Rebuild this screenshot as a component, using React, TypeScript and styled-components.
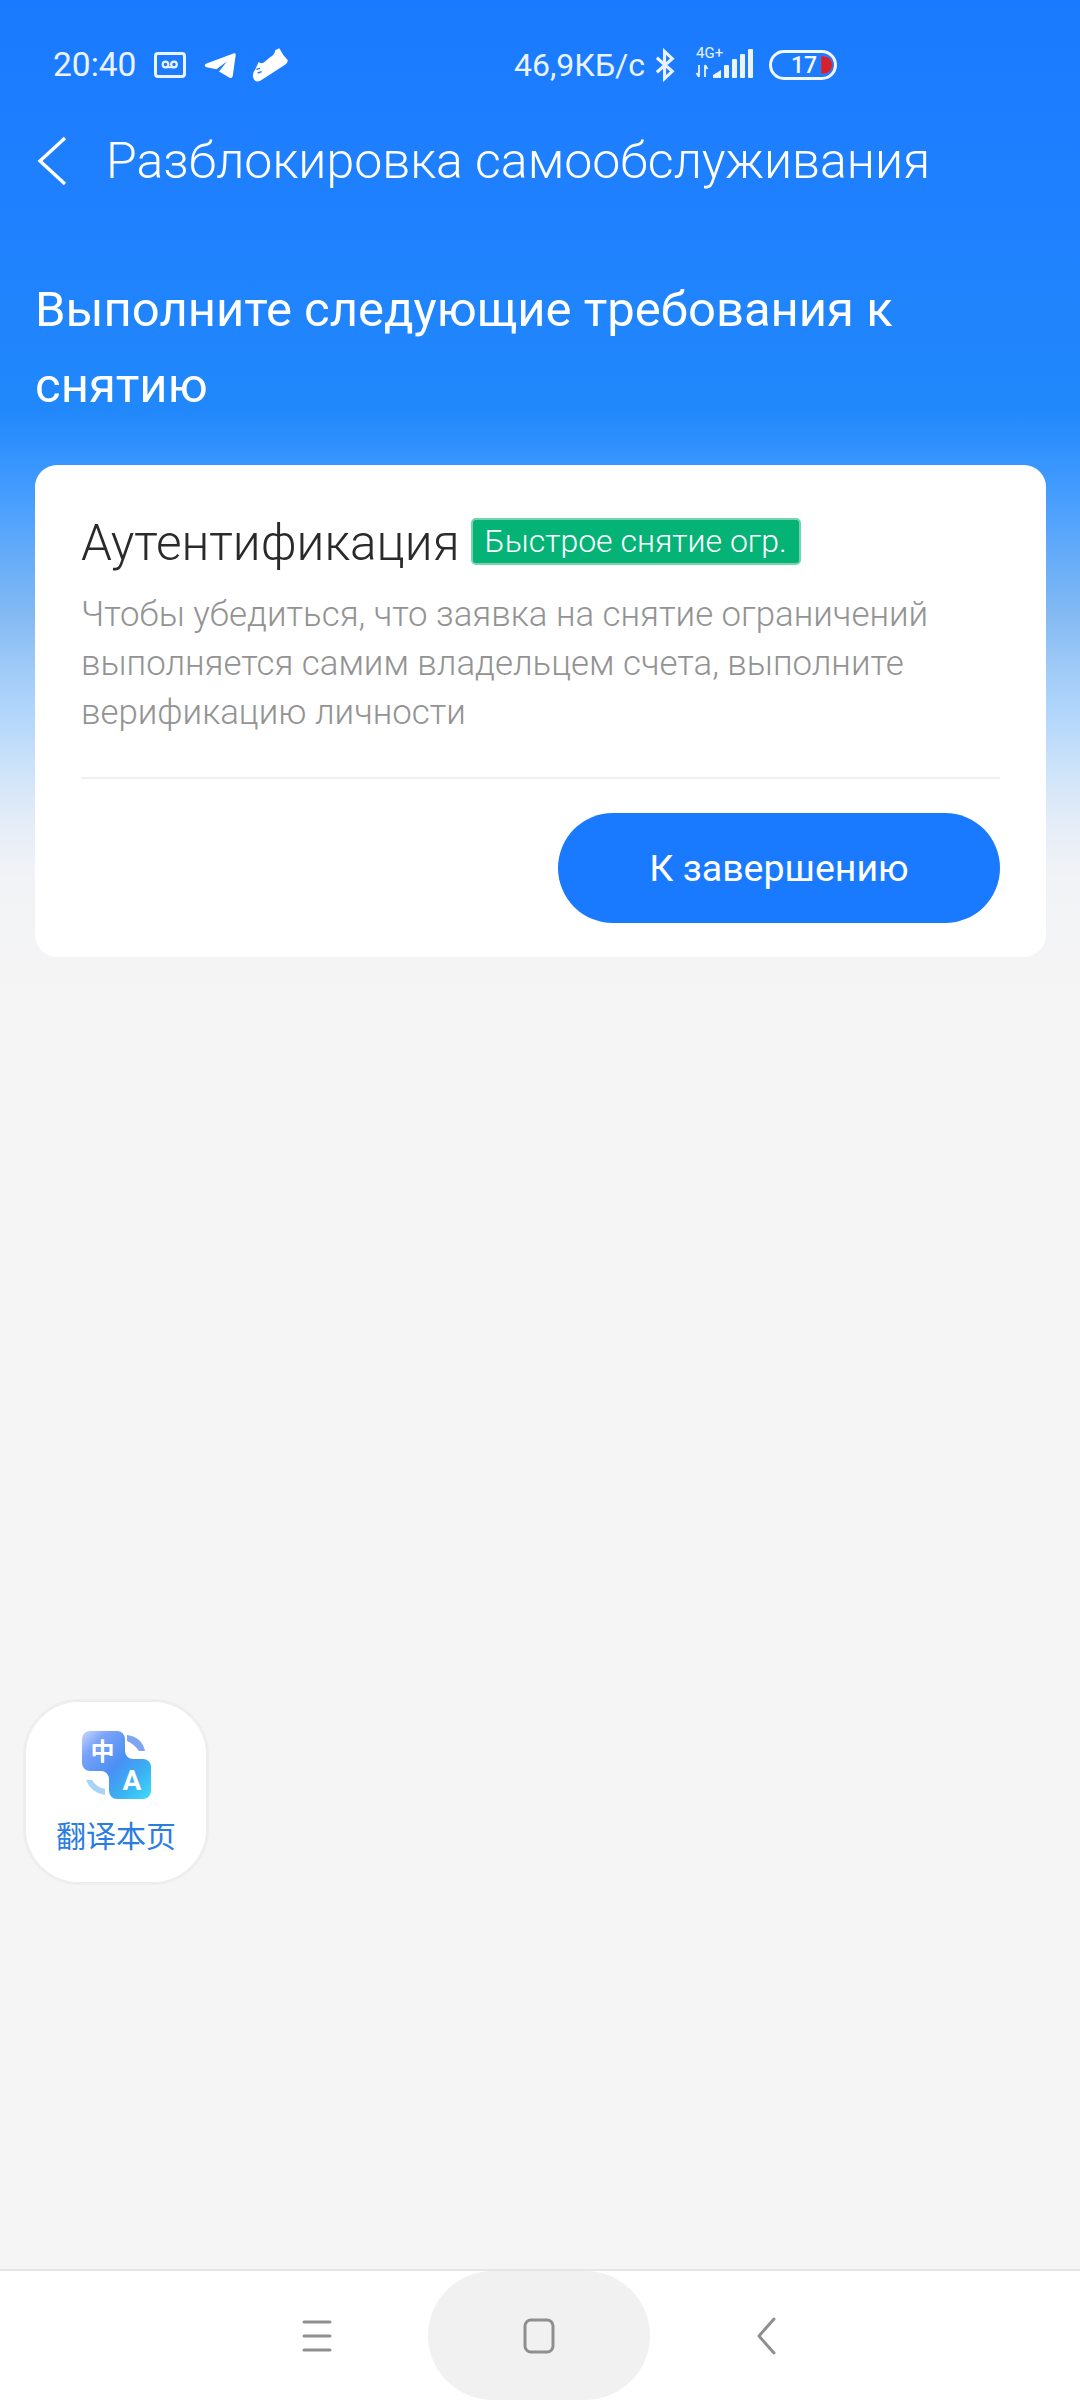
import React from "react";
import styled, { createGlobalStyle } from "styled-components";

const Global = createGlobalStyle`
  html, body { margin: 0; padding: 0; }
  body { font-family: Roboto, "Liberation Sans", sans-serif; background: #f5f5f5; }
`;

const Page = styled.div`
  position: relative;
  width: 1080px;
  height: 2400px;
  display: flex;
  flex-direction: column;
  overflow: hidden;
  background: linear-gradient(
    180deg,
    #1a7aff 0,
    #1f80ff 200px,
    #2188fb 409px,
    #429bff 488px,
    #6aaef8 566px,
    #85baf2 618px,
    #a0cbf8 670px,
    #b6d8fb 723px,
    #d0e4f9 775px,
    #e6edf7 827px,
    #f2f3f6 880px,
    #f5f5f5 1010px
  );
`;

const StatusBar = styled.div`
  height: 130px;
  flex: none;
  display: flex;
  align-items: center;
  justify-content: space-between;
  padding: 0 243px 0 53px;
  color: #eaf3ff;
  box-sizing: border-box;
`;

const StatusGroup = styled.div<{ $gap: number }>`
  display: flex;
  align-items: center;
  gap: ${(p) => p.$gap}px;
`;

const StatusText = styled.span<{ $size: number }>`
  font-size: ${(p) => p.$size}px;
  line-height: 40px;
  font-weight: 400;
`;

const Header = styled.div`
  height: 62px;
  display: flex;
  align-items: center;
  padding-left: 37px;
  color: #fff;
`;

const HeaderTitle = styled.h1`
  margin: 0 0 0 39px;
  font-size: 50px;
  font-weight: 300;
  white-space: nowrap;
`;

const Heading = styled.h2`
  margin: 80px 0 0;
  padding: 0 35px;
  color: #fff;
  font-size: 49px;
  line-height: 76px;
  font-weight: 400;
`;

const Card = styled.section`
  margin: 41px 34px 0 35px;
  padding: 46px 46px 34px;
  background: #fff;
  border-radius: 22px;
  display: flex;
  flex-direction: column;
`;

const TitleRow = styled.div`
  display: flex;
  align-items: center;
  gap: 11px;
  height: 64px;
`;

const CardTitle = styled.h3`
  margin: 0;
  font-size: 49.5px;
  font-weight: 300;
  color: #2a2a2a;
  white-space: nowrap;
`;

const Badge = styled.span`
  box-sizing: border-box;
  height: 47px;
  padding: 0 12px;
  display: inline-flex;
  align-items: center;
  background: #06b377;
  border: 2px solid #76d3ae;
  border-radius: 5px;
  color: #fff;
  font-size: 32px;
  font-weight: 300;
  white-space: nowrap;
  transform: translateY(-2px);
`;

const Description = styled.p`
  margin: 15px 0 0;
  font-size: 34.8px;
  line-height: 49px;
  font-weight: 300;
  color: #939393;
`;

const Divider = styled.div`
  height: 2px;
  background: #f0f0f0;
  margin-top: 40px;
`;

const ActionRow = styled.div`
  display: flex;
  justify-content: flex-end;
  margin-top: 34px;
`;

const PrimaryButton = styled.button`
  width: 442px;
  height: 110px;
  border: 0;
  border-radius: 55px;
  background: #1a7aff;
  color: #fff;
  font-family: inherit;
  font-size: 37.5px;
  font-weight: 400;
`;

const Spacer = styled.div`
  flex: 1;
`;

const FloatButton = styled.div`
  position: absolute;
  left: 23px;
  top: 1699px;
  box-sizing: border-box;
  width: 186px;
  height: 186px;
  border-radius: 56px;
  background: #fff;
  border: 3px solid #eeeeee;
  display: flex;
  flex-direction: column;
  align-items: center;
  padding-top: 29px;
`;

const FloatLabel = styled.span`
  margin-top: 15px;
  font-family: "Noto Sans CJK SC", sans-serif;
  font-size: 30px;
  line-height: 40px;
  color: #2a7de1;
  white-space: nowrap;
`;

const NavBar = styled.nav`
  flex: none;
  height: 131px;
  box-sizing: border-box;
  border-top: 2px solid #e6e6e6;
  padding-right: 2px;
  background: #fff;
  display: flex;
  justify-content: center;
  align-items: center;
`;

const NavSlot = styled.div<{ $shift?: number }>`
  width: 222px;
  box-sizing: border-box;
  padding-left: ${(p) => p.$shift ?? 0}px;
  display: flex;
  justify-content: center;
  align-items: center;
`;

const NavHome = styled(NavSlot)`
  height: 129px;
  background: #f1f1f1;
  border-radius: 65px;
`;

const Tape = () => (
  <svg width="32" height="26" viewBox="0 0 32 26" fill="none" stroke="#eaf3ff">
    <rect x="1.5" y="1.5" width="29" height="23" rx="2.5" strokeWidth="3" />
    <circle cx="11.5" cy="12.5" r="2.8" strokeWidth="2.2" />
    <circle cx="20" cy="12.5" r="2.8" strokeWidth="2.2" />
    <path d="M11.5 15.2h8.500" strokeWidth="2" />
  </svg>
);

const Telegram = () => (
  <svg width="32" height="27" viewBox="176 33 98 81" fill="#fff">
    <path d="M268 36 Q274 35 273 41 L264 106 Q262 115 253 110 L222 92 L246 61 L214 85 L184 79 Q174 74 182 68 Z" />
  </svg>
);

const ShoeWrap = styled.span`
  display: inline-flex;
  margin-left: -2px;
`;

const Shoe = () => (
  <ShoeWrap>
    <svg width="36" height="34" viewBox="322 20 108 102">
      <path
        fill="#fff"
        d="M392 26 L404 21 Q414 42 429 56 Q431 64 421 70 L347 118 Q330 126 325 108 Q323 94 332 84 L342 62 Q352 70 362 60 L376 48 Q390 42 392 26 Z"
      />
      <path d="M335 84 L346 81 M339 95 L351 91" stroke="#1a7aff" strokeWidth="4" fill="none" />
    </svg>
  </ShoeWrap>
);

const Bluetooth = () => (
  <svg width="20" height="34" viewBox="0 0 22 34" fill="none" stroke="#eaf3ff" strokeWidth="3.4">
    <path d="M2 9 L19 24 L10.5 32 V2 L19 10 L2 25" />
  </svg>
);

const Signal = () => (
  <svg width="58" height="42" viewBox="0 -3 58 42" fill="#eaf3ff">
    <text x="1" y="11" fontSize="15" fontFamily="Roboto, sans-serif" fill="#eaf3ff">4G+</text>
    <path d="M4 18v12M1.5 26l2.5 4 M10 30V18M10 18l2.5 4" stroke="#eaf3ff" strokeWidth="1.8" fill="none" />
    <path d="M18 31v-3l8-5v8z" />
    <rect x="29" y="18" width="5" height="13" rx="1" />
    <rect x="37" y="12" width="5" height="19" rx="1" />
    <rect x="45" y="7" width="5" height="24" rx="1" />
    <rect x="53" y="2" width="5" height="29" rx="1" />
  </svg>
);

const Battery = () => (
  <svg width="68" height="30" viewBox="0 0 68 30">
    <rect x="1.5" y="1.5" width="65" height="27" rx="13.5" fill="none" stroke="#f2f7ff" strokeWidth="3" />
    <text x="22" y="22.8" fontSize="23" fontWeight="500" fontFamily="Roboto, sans-serif" fill="#f2f7ff">17</text>
    <path d="M52 6h2.500a9 9 0 0 1 0 18H52z" fill="#d3222c" stroke="#7a67c8" strokeWidth="0.6" />
  </svg>
);

const BackChevron = () => (
  <svg width="30" height="50" viewBox="0 0 30 50" fill="none" stroke="#fff" strokeWidth="3.4">
    <path d="M28 2 L3 25 L28 48" />
  </svg>
);

const TranslateIcon = () => (
  <svg width="69" height="68" viewBox="0 0 69 68">
    <defs>
      <linearGradient id="blob" x1="0" y1="0" x2="1" y2="1">
        <stop offset="0" stopColor="#c8d8ff" />
        <stop offset="0.2" stopColor="#7aa2f9" />
        <stop offset="0.5" stopColor="#4a90f4" />
        <stop offset="0.75" stopColor="#3ab2f3" />
        <stop offset="1" stopColor="#3fdcfc" />
      </linearGradient>
    </defs>
    <path
      d="M8 0 H35 a8 8 0 0 1 8 8 V20 a8 8 0 0 0 8 8 H61 a8 8 0 0 1 8 8 V60 a8 8 0 0 1 -8 8 H35 a8 8 0 0 1 -8 -8 V48 a8 8 0 0 0 -8 -8 H8 a8 8 0 0 1 -8 -8 V8 a8 8 0 0 1 8 -8 Z"
      fill="url(#blob)"
    />
    <path d="M45 4 Q60 6 63 20 H57 Q52 13 45 10 Z" fill="#7da5f2" />
    <path d="M4 49 H10 Q14 56 23 58 V64 Q9 62 4 49 Z" fill="#a9d3f7" />
    <text x="20.5" y="29" textAnchor="middle" fontSize="24" fontWeight="700" fontFamily="'Noto Sans CJK SC', sans-serif" fill="#fff">中</text>
    <text x="50" y="59" textAnchor="middle" fontSize="28" fontWeight="700" fontFamily="Roboto, sans-serif" fill="#fff">A</text>
  </svg>
);

const MenuIcon = () => (
  <svg width="30" height="32" viewBox="0 0 30 32" stroke="#8f8f8f" strokeWidth="3" strokeLinecap="round">
    <path d="M2 2h26M2 16h26M2 30h26" />
  </svg>
);

const HomeIcon = () => (
  <svg width="32" height="36" viewBox="0 0 32 36" fill="none" stroke="#8f8f8f" strokeWidth="3">
    <rect x="2" y="2" width="28" height="32" rx="6" />
  </svg>
);

const BackIcon = () => (
  <svg width="20" height="38" viewBox="0 0 20 38" fill="none" stroke="#8f8f8f" strokeWidth="3" strokeLinecap="round" strokeLinejoin="round">
    <path d="M17 2 L2 19 L17 36" />
  </svg>
);

export default function App() {
  return (
    <Page>
      <Global />
      <StatusBar>
        <StatusGroup $gap={18}>
          <StatusText $size={33.5}>20:40</StatusText>
          <Tape />
          <Telegram />
          <Shoe />
        </StatusGroup>
        <StatusGroup $gap={20}>
          <StatusGroup $gap={10}>
            <StatusText $size={32}>46,9КБ/с</StatusText>
            <Bluetooth />
          </StatusGroup>
          <StatusGroup $gap={16}>
            <Signal />
            <Battery />
          </StatusGroup>
        </StatusGroup>
      </StatusBar>
      <Header>
        <BackChevron />
        <HeaderTitle>Разблокировка самообслуживания</HeaderTitle>
      </Header>
      <Heading>Выполните следующие требования к снятию</Heading>
      <Card>
        <TitleRow>
          <CardTitle>Аутентификация</CardTitle>
          <Badge>Быстрое снятие огр.</Badge>
        </TitleRow>
        <Description>
          Чтобы убедиться, что заявка на снятие ограничений выполняется самим владельцем счета, выполните верификацию личности
        </Description>
        <Divider />
        <ActionRow>
          <PrimaryButton>К завершению</PrimaryButton>
        </ActionRow>
      </Card>
      <Spacer />
      <FloatButton>
        <TranslateIcon />
        <FloatLabel>翻译本页</FloatLabel>
      </FloatButton>
      <NavBar>
        <NavSlot><MenuIcon /></NavSlot>
        <NavHome><HomeIcon /></NavHome>
        <NavSlot $shift={12}><BackIcon /></NavSlot>
      </NavBar>
    </Page>
  );
}
